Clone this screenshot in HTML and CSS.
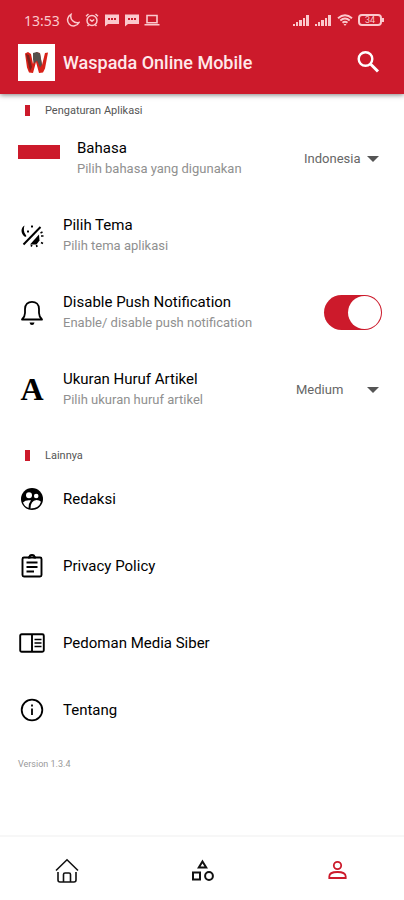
FILE: index.html
```html
<!DOCTYPE html>
<html lang="id">
<head>
    <meta charset="UTF-8">
    <meta name="viewport" content="width=device-width, initial-scale=1.0">
    <title>Waspada Online Mobile</title>
    <link rel="stylesheet" href="styles.css">
</head>
<body>
    <header class="header">
        <div class="status">
            <span class="time">13:53</span>
            <svg width="14" height="14" viewBox="0 0 14 14" fill="none" stroke="currentColor" stroke-width="1.500"><path d="M5 1.500A6 6 0 1 0 13 9.500 6.500 6.500 0 0 1 5 1.500Z"/></svg>
            <svg width="14" height="14" viewBox="0 0 14 14" fill="none" stroke="currentColor" stroke-width="1.500"><circle cx="7" cy="7.500" r="5"/><path d="M1 3.200 3.500 1M13 3.200 10.500 1M2.500 13l1.200-1.300M11.500 13l-1.200-1.300M4.800 6.500 7 8.300l2.200-1.800"/></svg>
            <svg width="15" height="14" viewBox="0 0 15 14" fill="currentColor"><path fill-rule="evenodd" d="M1 1.500h14V11H4L1 13.500ZM4 5v2h2V5Zm3 0v2h2V5Zm3 0v2h2V5Z"/></svg>
            <svg width="15" height="14" viewBox="0 0 15 14" fill="currentColor"><path fill-rule="evenodd" d="M1 1.500h14V11H4L1 13.500ZM4 5v2h2V5Zm3 0v2h2V5Zm3 0v2h2V5Z"/></svg>
            <svg width="16" height="14" viewBox="0 0 16 14" fill="none" stroke="currentColor" stroke-width="1.600"><path d="M3 9.800V2.500h10v7.300zM0.500 11.800h15"/></svg>
            <span class="spacer"></span>
            <svg width="17" height="14" viewBox="0 0 17 14" fill="currentColor"><path d="M0 11h2v2H0zM3 9h2v4H3zM6 7h3v6H6zM10 5h2v8h-2zM13 2h3v11h-3z"/></svg>
            <svg width="17" height="14" viewBox="0 0 17 14" fill="currentColor"><path d="M0 11h2v2H0zM3 9h2v4H3zM6 7h3v6H6zM10 5h2v8h-2zM13 2h3v11h-3z"/></svg>
            <svg width="16" height="14" viewBox="0 0 16 14" fill="none" stroke="currentColor" stroke-width="1.900"><path d="M1 5.200Q8-.8 15 5.200M3.300 7.500Q8 3.500 12.700 7.500M5.500 9.800Q8 7.700 10.500 9.800"/><path d="m6.500 11 1.500 2 1.500-2z" fill="currentColor" stroke="none"/></svg>
            <span class="battery">34</span>
        </div>
        <div class="appbar">
            <svg class="logo" width="37" height="37" viewBox="0 0 37 37">
                <path d="M0 0h37v37H0z" fill="#fff"/>
                <path d="M7 9.500 10 8l3 2 2 10 3-12 4 1 2 12 3-12 3-.500-3 16-2 4-4 .5-3-11-3 11-4-.500-2-5z" fill="#d92118"/>
                <path d="m15 9 4-1 3 1.500 2 11-2 3-3-7-3 3-1-4z" fill="#55504c"/>
                <path d="m8 10 3 1 3 12-2 4z" fill="#7c211d"/>
            </svg>
            <h1 class="title">Waspada Online Mobile</h1>
            <button class="search" type="button" aria-label="Cari">
                <svg width="24" height="24" viewBox="0 0 24 24" fill="none" stroke="currentColor"><circle cx="9.500" cy="9" r="6.800" stroke-width="2.400"/><path d="m14.500 14 7.500 7.500" stroke-width="3"/></svg>
            </button>
        </div>
    </header>

    <main class="settings">
        <h2 class="section">Pengaturan Aplikasi</h2>
        <div class="row">
            <span class="lead flag"></span>
            <label class="text" for="bahasa">Bahasa<small class="sub">Pilih bahasa yang digunakan</small></label>
            <span class="dropdown">
                <select id="bahasa">
                    <option>Indonesia</option>
                    <option>English</option>
                </select>
            </span>
        </div>
        <div class="row">
            <span class="lead">
                <svg width="24" height="24" viewBox="0 0 24 24" fill="none" stroke="currentColor"><path d="M3.500 20.500 20.500 3" stroke-width="2"/><path d="M4.500 1.500C.5 4 .5 9.500 4.500 12.500 7 13.500 6.500 11.500 5.500 10.500 3.500 8 3.500 4.500 4.500 1.500Z" fill="currentColor" stroke="none"/><path d="M10 20.500 19 10.500l.5 6-3 4z" fill="currentColor" stroke="none"/><path d="M7 7.500h2M8 6.500v2M11 2.500h2M12 1.500v2M21 12h2.500M21 18.500l2 1M16.500 21l.5 2M12 21l-1 1.500M20.500 9l2-1" stroke-width="1.600"/></svg>
            </span>
            <span class="text">Pilih Tema<small class="sub">Pilih tema aplikasi</small></span>
        </div>
        <div class="row">
            <span class="lead">
                <svg width="24" height="26" viewBox="0 0 24 26" fill="none" stroke="currentColor" stroke-width="1.800"><path d="M2 19.500Q5 16.500 5 13V9C5 4.500 8 1.800 12 1.800S19 4.500 19 9v4q0 3.500 3 6.500Z" stroke-linejoin="round"/><path d="M9.500 22.500h5q-.5 2.500-2.500 2.500t-2.500-2.500z" fill="currentColor" stroke="none"/></svg>
            </span>
            <label class="text" for="notif">Disable Push Notification<small class="sub">Enable/ disable push notification</small></label>
            <input class="switch" id="notif" type="checkbox" role="switch" checked>
        </div>
        <div class="row">
            <span class="lead letter" aria-hidden="true">A</span>
            <label class="text" for="ukuran">Ukuran Huruf Artikel<small class="sub">Pilih ukuran huruf artikel</small></label>
            <span class="dropdown wide">
                <select id="ukuran">
                    <option>Small</option>
                    <option selected>Medium</option>
                    <option>Large</option>
                </select>
            </span>
        </div>

        <h2 class="section other">Lainnya</h2>
        <a class="row link" href="#redaksi">
            <span class="lead">
                <svg width="24" height="24" viewBox="0 0 24 24"><circle cx="12" cy="12" r="11" fill="currentColor"/><g fill="#fff"><circle cx="9" cy="8.300" r="3"/><circle cx="16.200" cy="9" r="2.300"/><path d="M3 15.500q2.500-3 8-2.200-2.500 3-2.500 7.700Q4.500 19.500 3 15.500ZM10.500 21.500q0-8 6-8.500 3 .2 4.500 1.800-2 6.700-10.500 6.700Z"/></g></svg>
            </span>
            <span class="text">Redaksi</span>
        </a>
        <a class="row link" href="#privacy">
            <span class="lead">
                <svg width="24" height="24" viewBox="0 0 24 24" fill="none" stroke="currentColor" stroke-width="1.900"><rect x="2.500" y="3.500" width="19" height="19" rx="1.500"/><path d="M8 3.500h1.500a2.500 2.500 0 0 1 5 0H16M6.500 8.500h11M6.500 13h11M6.500 17.500H14"/></svg>
            </span>
            <span class="text">Privacy Policy</span>
        </a>
        <a class="row link pedoman" href="#pedoman">
            <span class="lead">
                <svg width="26" height="20" viewBox="0 0 26 20" fill="none" stroke="currentColor" stroke-width="1.900"><rect x="1.200" y="1.200" width="23.600" height="17.600" rx="1.500"/><path d="M13 1v18"/><path d="M15.500 6.500h7M15.500 10h7M15.500 13.500h7" stroke-width="1.500"/></svg>
            </span>
            <span class="text">Pedoman Media Siber</span>
        </a>
        <a class="row link" href="#tentang">
            <span class="lead">
                <svg width="24" height="24" viewBox="0 0 24 24" fill="none" stroke="currentColor" stroke-width="1.800"><circle cx="12" cy="12" r="10.300"/><path d="M12 10.500V17M12 6.500v2"/></svg>
            </span>
            <span class="text">Tentang</span>
        </a>
        <p class="version">Version 1.3.4</p>
    </main>

    <nav class="nav">
        <a href="#home" aria-label="Beranda">
            <svg width="24" height="26" viewBox="0 0 24 26" fill="none" stroke="currentColor" stroke-width="1.600"><path d="M1 12.500 12 1.800l11 10.700M3 14v8q0 2 2 2h14q2 0 2-2v-8M8.500 24v-7.500q0-1.500 1.500-1.500h4q1.500 0 1.500 1.500V24"/></svg>
        </a>
        <a href="#kategori" aria-label="Kategori">
            <svg width="24" height="24" viewBox="0 0 24 24" fill="none" stroke="currentColor" stroke-width="2"><path d="m12.500 2.500 3.700 6H8.800z"/><path d="M3 13.500h7v7H3z"/><circle cx="19" cy="17" r="3.900"/></svg>
        </a>
        <a class="active" href="#profil" aria-label="Profil">
            <svg width="24" height="24" viewBox="0 0 24 24" fill="none" stroke="currentColor" stroke-width="1.800"><circle cx="12.500" cy="6.500" r="3.700"/><path d="M4.300 19v-1.500q0-4.500 8.200-4.500t8.200 4.500V19z"/></svg>
        </a>
    </nav>
</body>
</html>
```
FILE: styles.css
```css
* {
    box-sizing: border-box;
}
body {
    margin: 0;
    min-height: 100vh;
    display: flex;
    flex-direction: column;
    background: #fff;
    color: #000;
    font-family: Roboto, "Liberation Sans", sans-serif;
}

/* header */
.header {
    background: #cc1a2b;
    color: #fff;
    padding: 10px 20px 10px 18px;
    box-shadow: 0 1px 5px rgba(0, 0, 0, 0.5);
}
.status {
    display: flex;
    align-items: center;
    gap: 5px;
    height: 20px;
    padding-left: 6px;
    color: #fbc9cd;
}
.time {
    font: 14px "Noto Sans", sans-serif;
    margin-right: 1px;
}
.spacer {
    flex: 1;
}
.battery {
    position: relative;
    width: 24px;
    height: 12px;
    margin-right: 2px;
    border: 2px solid;
    border-radius: 4px;
    font-size: 9px;
    line-height: 8px;
    text-align: center;
}
.battery::after {
    content: "";
    position: absolute;
    right: -4px;
    top: 2px;
    width: 2px;
    height: 4px;
    background: currentColor;
}
.appbar {
    display: flex;
    align-items: center;
    margin-top: 12px;
    margin-bottom: 2px;
    height: 40px;
}
.title {
    flex: 1;
    margin: 0 0 0 8px;
    font-size: 18px;
    font-weight: 500;
    color: #ffe9ea;
}
.search {
    display: flex;
    width: 32px;
    height: 32px;
    padding: 4px;
    border: 0;
    background: none;
    color: #fff;
}

/* settings */
.settings {
    flex: 1;
    padding: 6px 22px 0 18px;
}
.section {
    display: flex;
    align-items: center;
    height: 20px;
    margin: 0;
    padding-left: 7px;
    font-size: 11px;
    font-weight: 400;
    color: #555;
}
.section::before {
    content: "";
    width: 5px;
    height: 11px;
    margin-right: 15px;
    background: #cc1a2b;
}
.other {
    margin-top: 17px;
}
.row {
    display: flex;
    align-items: center;
    height: 77px;
    color: inherit;
    text-decoration: none;
}
.link {
    height: 67px;
}
.pedoman {
    margin-top: 10px;
}
.lead {
    display: flex;
    justify-content: center;
    min-width: 28px;
    margin-right: 17px;
}
.flag {
    width: 42px;
    height: 28px;
    background: linear-gradient(#cc1a2b 50%, #fff 50%);
}
.letter {
    font: bold 32px "Liberation Serif", serif;
}
.text {
    flex: 1;
    font-size: 15px;
    font-weight: 400;
    line-height: 20px;
}
.sub {
    display: block;
    font-size: 13px;
    line-height: 22px;
    color: #909090;
}
.dropdown {
    position: relative;
    width: 78px;
}
.wide {
    width: 86px;
}
.dropdown select {
    width: 100%;
    height: 32px;
    padding: 0;
    border: 0;
    appearance: none;
    background: none;
    font: 13px Roboto, "Liberation Sans", sans-serif;
    color: #666;
}
.dropdown::after {
    content: "";
    position: absolute;
    right: 3px;
    top: 13px;
    border: 6px solid transparent;
    border-top-color: #555;
    border-bottom: 0;
    pointer-events: none;
}
.switch {
    appearance: none;
    display: flex;
    justify-content: flex-start;
    width: 58px;
    height: 35px;
    margin: 0;
    padding: 1px;
    border-radius: 18px;
    background: #bbb;
}
.switch::before {
    content: "";
    width: 33px;
    height: 33px;
    border-radius: 50%;
    background: #fff;
}
.switch:checked {
    justify-content: flex-end;
    background: #cc1a2b;
}
.version {
    margin: 14px 0;
    font-size: 9px;
    line-height: 14px;
    color: #999;
}

/* bottom navigation */
.nav {
    display: flex;
    height: 65px;
    border-top: 2px solid #f7f7f7;
}
.nav a {
    flex: 1;
    display: flex;
    align-items: center;
    justify-content: center;
    padding-top: 4px;
    color: #111;
}
.nav .active {
    color: #cc1a2b;
}
```
